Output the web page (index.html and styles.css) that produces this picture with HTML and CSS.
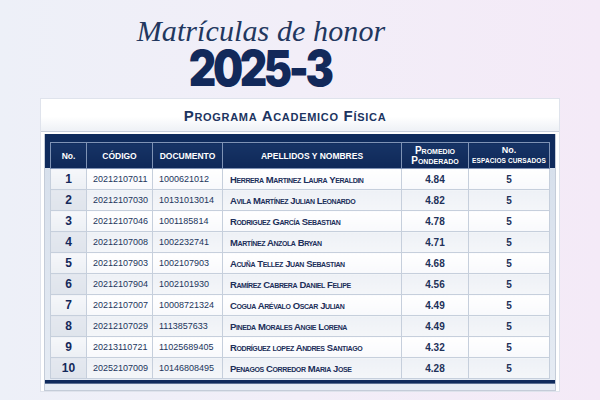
FILE: index.html
```html
<!DOCTYPE html>
<html lang="es">
<head>
<meta charset="utf-8">
<link rel="stylesheet" href="styles.css">
</head>
<body>
<div class="page">
  <header class="hero">
    <div class="subtitle">Matrículas de honor</div>
    <div class="year">2025-3</div>
  </header>
  <section class="card">
    <div class="band">Programa Academico Física</div>
    <div class="frame">
      <table class="grid">
        <thead>
          <tr>
            <th class="c-no">No.</th>
            <th class="c-cod">CÓDIGO</th>
            <th class="c-doc">DOCUMENTO</th>
            <th class="c-name">APELLIDOS Y NOMBRES</th>
            <th class="c-prom sc">Promedio<br>Ponderado</th>
            <th class="c-esp"><span class="esp-top">No.</span><br><span class="esp-bot">ESPACIOS CURSADOS</span></th>
          </tr>
        </thead>
        <tbody>
          <tr><td class="n">1</td><td>20212107011</td><td>1000621012</td><td class="nm">Herrera Martinez Laura Yeraldin</td><td class="p">4.84</td><td class="p">5</td></tr>
          <tr class="alt"><td class="n">2</td><td>20212107030</td><td>10131013014</td><td class="nm">Avila Martínez Julian Leonardo</td><td class="p">4.82</td><td class="p">5</td></tr>
          <tr><td class="n">3</td><td>20212107046</td><td>1001185814</td><td class="nm">Rodriguez García Sebastian</td><td class="p">4.78</td><td class="p">5</td></tr>
          <tr class="alt"><td class="n">4</td><td>20212107008</td><td>1002232741</td><td class="nm">Martínez Anzola Bryan</td><td class="p">4.71</td><td class="p">5</td></tr>
          <tr><td class="n">5</td><td>20212107903</td><td>1002107903</td><td class="nm">Acuña Tellez Juan Sebastian</td><td class="p">4.68</td><td class="p">5</td></tr>
          <tr class="alt"><td class="n">6</td><td>20212107904</td><td>1002101930</td><td class="nm">Ramírez Cabrera Daniel Felipe</td><td class="p">4.56</td><td class="p">5</td></tr>
          <tr><td class="n">7</td><td>20212107007</td><td>10008721324</td><td class="nm">Cogua Arévalo Oscar Julian</td><td class="p">4.49</td><td class="p">5</td></tr>
          <tr class="alt"><td class="n">8</td><td>20212107029</td><td>1113857633</td><td class="nm">Pineda Morales Angie Lorena</td><td class="p">4.49</td><td class="p">5</td></tr>
          <tr><td class="n">9</td><td>20213110721</td><td>11025689405</td><td class="nm">Rodríguez lopez Andres Santiago</td><td class="p">4.32</td><td class="p">5</td></tr>
          <tr class="alt"><td class="n">10</td><td>20252107009</td><td>10146808495</td><td class="nm">Penagos Corredor Maria Jose</td><td class="p">4.28</td><td class="p">5</td></tr>
        </tbody>
      </table>
      <div class="base"></div>
    </div>
  </section>
</div>
</body>
</html>
```

FILE: styles.css
```css
html, body {
  margin: 0;
  padding: 0;
}
body {
  width: 600px;
  height: 400px;
  overflow: hidden;
  background: linear-gradient(90deg, #edf0f8 0%, #f2eef8 50%, #f4eaf7 100%);
  font-family: "Liberation Sans", Arial, sans-serif;
  color: #1b2f58;
}
.page {
  display: flex;
  flex-direction: column;
  align-items: center;
}
.hero {
  display: flex;
  flex-direction: column;
  align-items: center;
  height: 98px;
  margin-right: 78px;
}
.subtitle {
  font-family: "Liberation Serif", "DejaVu Serif", serif;
  font-style: italic;
  font-size: 30px;
  color: #22375f;
  margin-top: 16px;
  line-height: 30px;
  letter-spacing: 0.1px;
}
.year {
  font-family: Inter, "Liberation Sans", sans-serif;
  font-weight: 900;
  font-size: 50px;
  line-height: 40px;
  letter-spacing: -4px;
  color: #12295a;
  margin-top: 2px;
  padding-right: 4px;
  transform: scaleX(0.85);
}
.card {
  width: 518px;
  height: 292px;
  background: #ffffff;
  border: 1px solid #dfe3ec;
  display: flex;
  flex-direction: column;
}
.band {
  height: 32px;
  display: flex;
  align-items: center;
  justify-content: center;
  padding-right: 30px;
  font-variant: small-caps;
  font-weight: bold;
  font-size: 15px;
  letter-spacing: 0.7px;
  color: #1c3461;
  background: linear-gradient(180deg, #ffffff 0%, #ffffff 55%, #eef1f6 100%);
  border-bottom: 1px solid #c9d0dc;
}
.frame {
  margin: 2px 3px 0 3px;
  padding: 8px 5px 0 5px;
  border: 1px solid #c4ccd8;
  border-top: none;
  background: linear-gradient(180deg, #0f2b5c 0, #0f2b5c 34px, #d7e0ec 34px, #e6ecf4 100%);
  flex: 1;
  display: flex;
  flex-direction: column;
}
.grid {
  width: 100%;
  border-collapse: collapse;
  table-layout: fixed;
}
.grid th {
  height: 25px;
  color: #ffffff;
  font-weight: bold;
  font-size: 8.5px;
  text-align: center;
  border: 1px solid #7f93b5;
  background: linear-gradient(180deg, #173466 0%, #0e2858 100%);
  padding: 0;
  line-height: 10px;
}
.c-no { width: 35px; }
.c-cod { width: 65px; }
.c-doc { width: 69px; }
.c-name { width: 178px; }
.c-prom { width: 66px; }
.grid th.sc {
  font-variant: small-caps;
  font-size: 10px;
}
.esp-top { font-size: 9px; }
.esp-bot { font-size: 6.5px; letter-spacing: 0.1px; }
.grid td {
  height: 20px;
  padding: 0;
  border: 1px solid #c6cfdc;
  font-size: 9px;
  color: #22355c;
  text-align: center;
  background: linear-gradient(180deg, #ffffff 0%, #f8f9fc 100%);
}
.grid tr.alt td {
  background: linear-gradient(180deg, #eef1f6 0%, #f4f6f9 100%);
}
.grid td:nth-child(2),
.grid td:nth-child(3) {
  text-align: left;
  padding-left: 6px;
}
.grid td.n {
  font-weight: bold;
  font-size: 12px;
  color: #14285a;
  background: linear-gradient(180deg, #f6f7fa 0%, #eceff4 100%);
}
.grid tr.alt td.n {
  background: linear-gradient(180deg, #e4e8ef 0%, #dfe4ec 100%);
}
.grid td.nm {
  text-align: left;
  padding-left: 7px;
  font-weight: bold;
  font-variant: small-caps;
  font-size: 9.5px;
  letter-spacing: -0.4px;
  color: #1c2f5a;
}
.grid td.p {
  font-weight: bold;
  font-size: 10px;
  color: #1e3159;
}
.base {
  height: 3px;
  margin: 1px -5px 0 -5px;
  background: #0f2b5c;
  box-shadow: 0 1px 0 #5a6f93;
}
```
